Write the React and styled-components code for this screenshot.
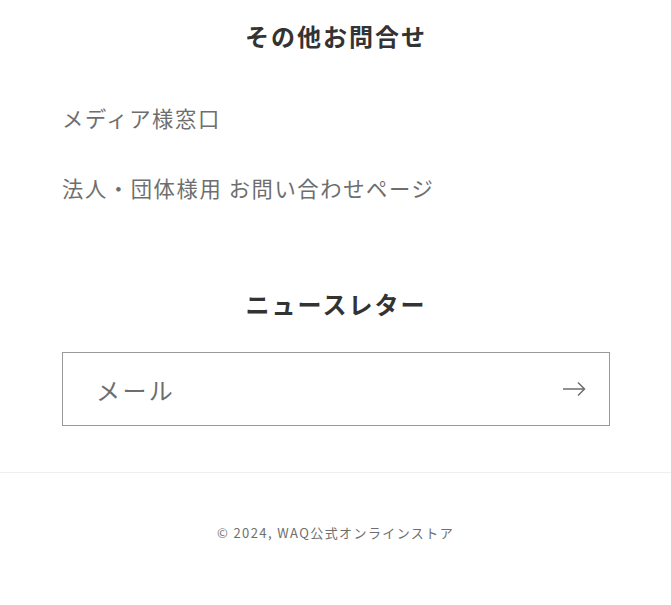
import React from "react";
import styled, { createGlobalStyle } from "styled-components";

const GlobalStyle = createGlobalStyle`
  html, body {
    margin: 0;
    padding: 0;
    background: #ffffff;
  }
  body {
    font-family: "Noto Sans CJK JP", "Noto Sans", sans-serif;
    color: #121212;
  }
`;

const Page = styled.div`
  width: 671px;
  height: 605px;
  overflow: hidden;
  background: #fff;
`;

const Content = styled.div`
  padding: 17px 61px 0 62px;
`;

const Block = styled.section`
  margin-bottom: ${(p) => p.$gap || 0}px;
`;

const Heading = styled.h2`
  margin: 0;
  text-align: center;
  font-size: 24px;
  line-height: 38px;
  font-weight: 700;
  letter-spacing: 2px;
  color: #333333;
`;

const LinkList = styled.ul`
  list-style: none;
  margin: 0;
  padding: 45px 0 0;
  display: flex;
  flex-direction: column;
  gap: 34px;
`;

const LinkItem = styled.li`
  font-size: 21.3px;
  line-height: 36px;
  letter-spacing: 1.6px;
  color: #6e6e6e;
`;

const Form = styled.form`
  margin-top: 29px;
  height: 74px;
  box-sizing: border-box;
  border: 1.5px solid #9a9a9a;
  display: flex;
  align-items: center;
  padding: 0 22px 0 33px;
`;

const EmailInput = styled.input`
  flex: 1;
  border: none;
  outline: none;
  background: transparent;
  font-family: "Noto Sans CJK JP", "Noto Sans", sans-serif;
  font-size: 24px;
  letter-spacing: 2.4px;
  color: #333;
  padding: 0;
  &::placeholder {
    color: #6e6e6e;
  }
`;

const SubmitButton = styled.button`
  border: none;
  background: none;
  padding: 0;
  width: 26px;
  height: 26px;
  display: flex;
  align-items: center;
  justify-content: center;
  color: #6e6e6e;
  cursor: pointer;
`;

const Divider = styled.hr`
  margin: 46px 0 0;
  border: none;
  border-top: 1px solid #efefef;
`;

const Footer = styled.footer`
  padding: 50px 0 0;
  text-align: center;
  font-size: 13px;
  letter-spacing: 1.4px;
  color: #6e6e6e;
`;

const ArrowIcon = () => (
  <svg width="24" height="16" viewBox="0 0 24 16" fill="none">
    <path
      d="M1 8H22.5M16 1.5L22.5 8L16 14.5"
      stroke="currentColor"
      strokeWidth="1.5"
    />
  </svg>
);

export default function App() {
  return (
    <Page>
      <GlobalStyle />
      <Content>
        <Block $gap={79}>
          <Heading>その他お問合せ</Heading>
          <LinkList>
            <LinkItem>メディア様窓口</LinkItem>
            <LinkItem>法人・団体様用 お問い合わせページ</LinkItem>
          </LinkList>
        </Block>
        <Block>
          <Heading>ニュースレター</Heading>
          <Form onSubmit={(e) => e.preventDefault()}>
            <EmailInput type="email" placeholder="メール" />
            <SubmitButton type="submit" aria-label="登録">
              <ArrowIcon />
            </SubmitButton>
          </Form>
        </Block>
      </Content>
      <Divider />
      <Footer>© 2024, WAQ公式オンラインストア</Footer>
    </Page>
  );
}
